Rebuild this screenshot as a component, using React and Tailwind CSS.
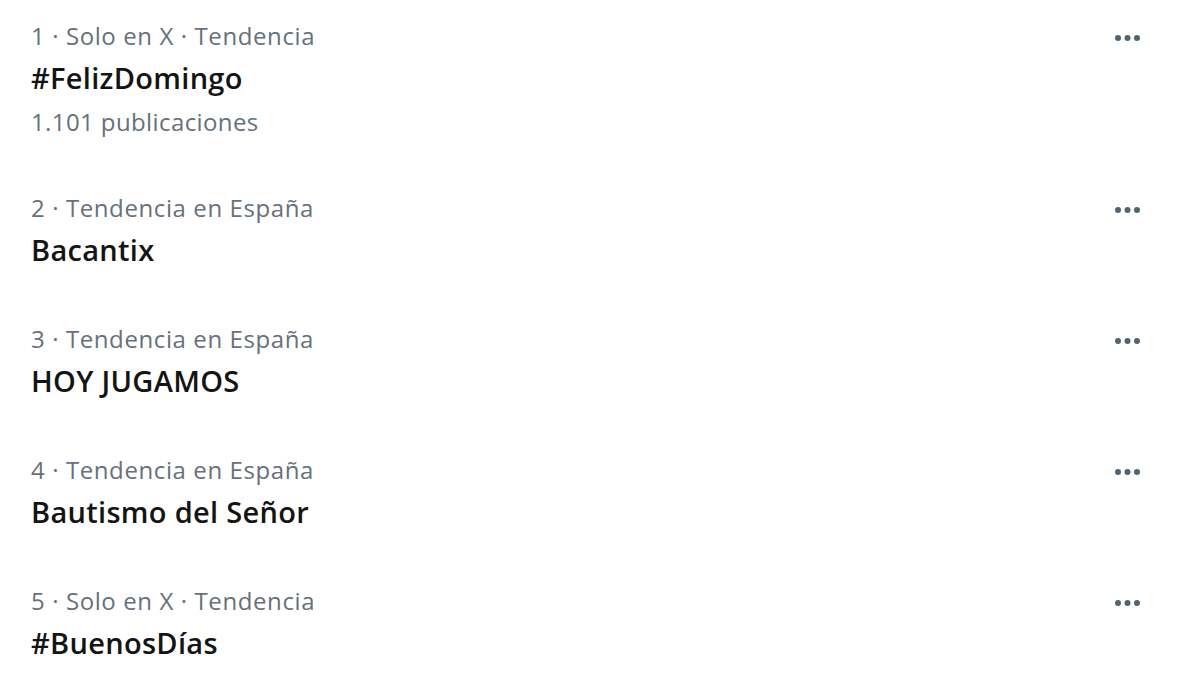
import React from "react";

const trends = [
  { meta: "1 · Solo en X · Tendencia", title: "#FelizDomingo", count: "1.101 publicaciones" },
  { meta: "2 · Tendencia en España", title: "Bacantix" },
  { meta: "3 · Tendencia en España", title: "HOY JUGAMOS" },
  { meta: "4 · Tendencia en España", title: "Bautismo del Señor" },
  { meta: "5 · Solo en X · Tendencia", title: "#BuenosDías" },
];

function Dots() {
  return (
    <svg width="34" height="10" viewBox="0 0 34 10" className="mt-[4px]">
      <circle cx="4" cy="5" r="3" fill="#536471" />
      <circle cx="13.5" cy="5" r="3" fill="#536471" />
      <circle cx="23" cy="5" r="3" fill="#536471" />
    </svg>
  );
}

export default function App() {
  return (
    <div
      className="w-[1200px] h-[675px] bg-white overflow-hidden flex flex-col gap-[58px] pt-[22px] pl-[31px] pr-[52px]"
      style={{ fontFamily: "'Open Sans', 'Liberation Sans', sans-serif" }}
    >
      {trends.map((t, i) => (
        <div key={i} className="flex justify-between items-start">
          <div className="flex flex-col">
            <div className="h-[28px] leading-[28px] text-[24px] text-[#66717b] tracking-[0.6px]">{t.meta}</div>
            <div className="mt-[11px] h-[34px] leading-[34px] text-[29px] font-semibold text-[#141414] tracking-[0.3px]">{t.title}</div>
            {t.count && (
              <div className="mt-[13px] h-[28px] leading-[28px] text-[24px] text-[#66717b] tracking-[0.4px]">{t.count}</div>
            )}
          </div>
          <div className="h-[28px] flex items-center">
            <Dots />
          </div>
        </div>
      ))}
    </div>
  );
}
